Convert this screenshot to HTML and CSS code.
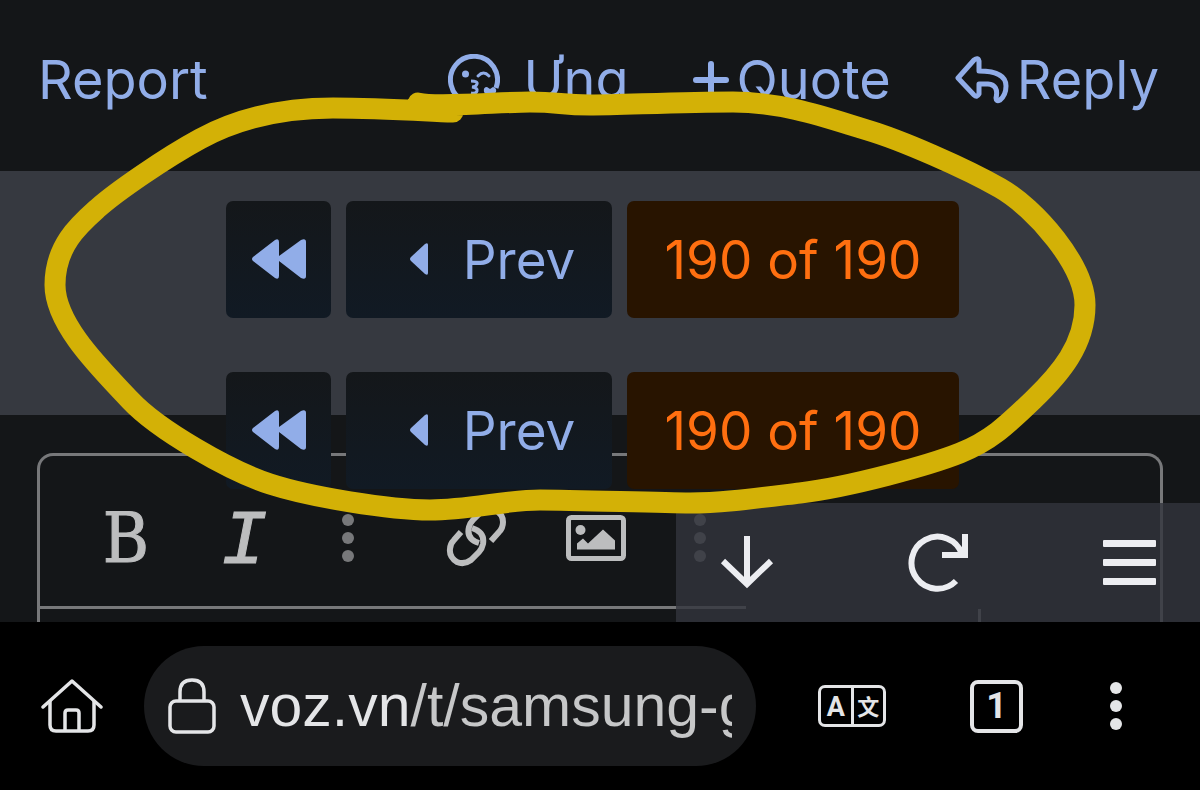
FILE: index.html
```html
<!DOCTYPE html>
<html lang="vi">
<head>
  <meta charset="UTF-8">
  <meta name="viewport" content="width=device-width, initial-scale=1.0">
  <title>voz.vn</title>
  <link rel="stylesheet" href="styles.css">
</head>
<body>
  <main class="page">
    <div class="post-actions">
      <a href="#" class="action report">Report</a>
      <a href="#" class="action react">
        <svg class="icon" width="52" height="52" viewBox="0 0 52 52" fill="none" stroke="currentColor" stroke-width="5">
          <path d="M48 34A23.500 23.500 0 1 0 38 46"/>
          <circle cx="17.500" cy="20" r="3.500" fill="currentColor" stroke="none"/>
          <path d="M30 22q5.500-6 11 0" stroke-width="3" stroke-linecap="round"/>
          <path d="M23 27q7 0 6 3t-5 3q6 1 5 4t-6 2" stroke-width="3"/>
          <path d="M42 46l-6-8q-1-5 3-5l3 2 3-2q4 1 3 5z" fill="currentColor" stroke="none"/>
        </svg>
        <span>Ưng</span>
      </a>
      <a href="#" class="action quote">
        <svg class="icon" width="36" height="40" viewBox="0 0 36 40" fill="none" stroke="currentColor" stroke-width="6" stroke-linecap="round">
          <path d="M18 4v32M3 20h30"/>
        </svg>
        <span>Quote</span>
      </a>
      <a href="#" class="action reply">
        <svg class="icon" width="54" height="50" viewBox="0 0 54 50" fill="none" stroke="currentColor" stroke-width="5" stroke-linejoin="round">
          <path d="M3 23L19 5q4-3 5 1v10q27 0 27 15 0 9-6 14-4 2-4-2 3-13-8-14h-9v10q-2 4-5 1z"/>
        </svg>
        <span>Reply</span>
      </a>
    </div>

    <div class="pagination">
      <nav class="page-nav">
        <a href="#" class="nav-btn first" aria-label="First page">
          <svg width="54" height="42" viewBox="0 0 54 42" fill="currentColor">
            <path d="M1 18L23 1q4-2 4 2v14L49 1q5-2 5 2v34q0 4-5 2L27 22v15q0 4-4 2L1 22q-2-2 0-4z"/>
          </svg>
        </a>
        <a href="#" class="nav-btn prev">
          <svg width="72" height="34" viewBox="0 0 72 34" fill="currentColor">
            <path d="M28 14L42 1q3-2 3 1v28q0 3-3 1L28 18q-2-2 0-4z"/>
          </svg>
          <span>Prev</span>
        </a>
        <a href="#" class="nav-btn current">190 of 190</a>
      </nav>
      <nav class="page-nav">
        <a href="#" class="nav-btn first" aria-label="First page">
          <svg width="54" height="42" viewBox="0 0 54 42" fill="currentColor">
            <path d="M1 18L23 1q4-2 4 2v14L49 1q5-2 5 2v34q0 4-5 2L27 22v15q0 4-4 2L1 22q-2-2 0-4z"/>
          </svg>
        </a>
        <a href="#" class="nav-btn prev">
          <svg width="72" height="34" viewBox="0 0 72 34" fill="currentColor">
            <path d="M28 14L42 1q3-2 3 1v28q0 3-3 1L28 18q-2-2 0-4z"/>
          </svg>
          <span>Prev</span>
        </a>
        <a href="#" class="nav-btn current">190 of 190</a>
      </nav>
    </div>

    <div class="editor">
      <div class="toolbar">
        <button class="tool bold">B</button>
        <button class="tool italic">I</button>
        <button class="tool more" aria-label="More text options">
          <svg width="12" height="48" viewBox="0 0 12 48" fill="currentColor">
            <circle cx="6" cy="6" r="6"/><circle cx="6" cy="24" r="6"/><circle cx="6" cy="42" r="6"/>
          </svg>
        </button>
        <span class="spacer"></span>
        <button class="tool" aria-label="Insert link">
          <svg width="64" height="60" viewBox="0 2 64 60" fill="none" stroke="currentColor" stroke-width="6">
            <path d="M33 37q-13-4-10-16 1-4 4-7l8-8q7-5 14-2 8 4 8 12 0 6-4 10l-8 9"/>
            <path d="M26 22q13 4 11 16-1 5-4 8l-8 8q-7 5-14 2-8-5-7-13 0-5 4-9l7-8"/>
          </svg>
        </button>
        <button class="tool" aria-label="Insert image">
          <svg width="60" height="46" viewBox="0 0 60 46" fill="currentColor">
            <rect x="2.500" y="2.500" width="55" height="41" rx="3" fill="none" stroke="currentColor" stroke-width="5"/>
            <circle cx="14.500" cy="15" r="5"/>
            <path d="M11 34.500v-6l6-5 5 5 15-14 12 11v9z"/>
          </svg>
        </button>
        <button class="tool more" aria-label="More options">
          <svg width="12" height="48" viewBox="0 0 12 48" fill="currentColor">
            <circle cx="6" cy="6" r="6"/><circle cx="6" cy="24" r="6"/><circle cx="6" cy="42" r="6"/>
          </svg>
        </button>
      </div>
      <div class="editor-body"></div>
    </div>

    <div class="float-bar">
      <button class="float-btn" aria-label="Scroll down">
        <svg width="54" height="54" viewBox="0 0 54 54" fill="none" stroke="currentColor" stroke-width="6">
          <path d="M27 0v48M3 25l24 23 24-23"/>
        </svg>
      </button>
      <button class="float-btn" aria-label="Reload">
        <svg width="60" height="60" viewBox="0 0 60 60" fill="none" stroke="currentColor" stroke-width="6">
          <path d="M48 48A26 26 0 1 1 54 21"/>
          <path d="M57 1v21H34"/>
        </svg>
      </button>
      <button class="float-btn" aria-label="Menu">
        <svg width="54" height="46" viewBox="0 0 54 46" fill="currentColor">
          <rect width="53" height="7" x="1" rx="1"/><rect width="53" height="7" x="1" y="19" rx="1"/><rect width="53" height="7" x="1" y="38" rx="1"/>
        </svg>
      </button>
    </div>
  </main>

  <footer class="browser-bar">
    <button class="bar-btn" aria-label="Home">
      <svg width="62" height="56" viewBox="0 0 62 56" fill="none" stroke="currentColor" stroke-width="3.500" stroke-linejoin="round">
        <path d="M2 29L31 3l29 26" stroke-linecap="round"/>
        <path d="M9 23v24q0 6 6 6h32q6 0 6-6V23"/>
        <path d="M24 53V35q0-3 3-3h8q3 0 3 3v18"/>
      </svg>
    </button>
    <div class="address">
      <svg class="lock" width="48" height="56" viewBox="0 0 48 56" fill="none" stroke="currentColor" stroke-width="3.500">
        <rect x="2" y="23" width="44" height="31" rx="6"/>
        <path d="M12 23V14q0-12 12-12t12 12v9"/>
      </svg>
      <input type="text" class="url" aria-label="Address" value="voz.vn/t/samsung-galaxy">
    </div>
    <button class="bar-btn translate" aria-label="Translate">
      <span>A</span><span class="han">文</span>
    </button>
    <button class="bar-btn tabs">1</button>
    <button class="bar-btn menu" aria-label="Menu">
      <svg width="12" height="48" viewBox="0 0 12 48" fill="currentColor">
        <circle cx="6" cy="6" r="6"/><circle cx="6" cy="24" r="6"/><circle cx="6" cy="42" r="6"/>
      </svg>
    </button>
  </footer>

  <!-- hand-drawn marker around the duplicated page navigation -->
  <svg class="marker" viewBox="0 0 1200 790" fill="none">
    <path d="M418 103C435 108 500 102 530 102S560 105 590 105S680 102 733 102S833 120 867 130S965 168 1000 188S1085 265 1085 305S1060 374 1033 400S990 441 960 453S850 487 800 493S720 503 690 503S575 500 540 500S470 510 430 510S310 497 270 484S158 430 130 400S55 325 55 285S80 224 98 208S165 158 200 139S280 108 333 108S440 112 453 112"/>
  </svg>
</body>
</html>
```
FILE: styles.css
```css
:root {
  --bg: #141618;
  --band: #363940;
  --link: #91ade8;
  --line: #77787a;
  --tool: #bcbdbe;
  --orange: #ff6f10;
  --light: #e4e5e7;
}
* {
  box-sizing: border-box;
  margin: 0;
  padding: 0;
}
body {
  height: 100vh;
  display: flex;
  flex-direction: column;
  position: relative;
  background: #000;
  font-family: 'Inter', sans-serif;
  font-size: 53px;
  line-height: 60px;
  overflow: hidden;
}
a {
  color: var(--link);
  text-decoration: none;
}
button {
  flex: none;
  background: none;
  border: none;
  color: inherit;
  font: inherit;
  cursor: pointer;
}
svg {
  display: block;
  flex: none;
}

/* post */
.page {
  flex: 1;
  min-height: 0;
  position: relative;
  background: var(--bg);
  overflow: hidden;
}
.post-actions {
  display: flex;
  align-items: flex-start;
  gap: 64px;
  height: 171px;
  padding: 50px 41px 0 38px;
  font-size: 54px;
}
.action {
  display: flex;
  align-items: center;
  gap: 8px;
}
.report {
  margin-right: auto;
}
.react {
  gap: 24px;
}

/* page navigation */
.pagination {
  display: flex;
  flex-direction: column;
  gap: 54px;
  height: 244px;
  padding-top: 30px;
  background: var(--band);
}
.page-nav {
  display: flex;
  justify-content: center;
  position: relative;
  z-index: 1;
}
.nav-btn {
  display: flex;
  align-items: center;
  justify-content: center;
  height: 117px;
  margin-right: 15px;
  border-radius: 7px;
  background: linear-gradient(#14171a, #111a24);
}
.first {
  width: 105px;
}
.prev {
  width: 266px;
  gap: 8px;
}
.current {
  width: 332px;
  background: #281400;
  color: var(--orange);
}

/* editor */
.editor {
  margin: 38px 37px 0 37px;
  border: 3px solid var(--line);
  border-bottom: none;
  border-radius: 16px 16px 0 0;
}
.toolbar {
  display: flex;
  align-items: center;
  width: 63%;
  height: 153px;
  padding: 14px 0 0 27px;
  border-bottom: 3px solid var(--line);
  color: var(--tool);
}
.tool {
  display: flex;
  align-items: center;
  justify-content: center;
  width: 118px;
  height: 80px;
}
.bold {
  font-family: 'DejaVu Serif Condensed', 'DejaVu Serif', serif;
  font-size: 70px;
  -webkit-text-stroke: 1px;
}
.italic {
  padding-top: 8px;
  font-family: 'Liberation Mono', monospace;
  font-style: italic;
  font-size: 78px;
  -webkit-text-stroke: 1px;
}
.more {
  width: 90px;
  color: var(--line);
}
.spacer {
  width: 26px;
}
.editor-body {
  width: 84%;
  height: 60px;
  border-right: 3px solid var(--line);
}

/* floating buttons */
.float-bar {
  position: absolute;
  right: 0;
  bottom: 0;
  z-index: 2;
  display: flex;
  align-items: center;
  justify-content: space-between;
  width: 524px;
  height: 119px;
  padding: 0 44px;
  background: rgba(50, 53, 61, 0.8);
  color: #ecedf1;
}

/* browser bar */
.browser-bar {
  display: flex;
  align-items: center;
  padding: 24px 78px 24px 41px;
  background: #000;
  color: var(--light);
}
.address {
  flex: 1;
  min-width: 0;
  display: flex;
  align-items: center;
  gap: 24px;
  height: 120px;
  margin: 0 62px 0 41px;
  padding: 0 24px;
  border-radius: 60px;
  background: #1a1b1d;
}
.url {
  flex: 1;
  min-width: 0;
  height: 80px;
  border: none;
  outline: none;
  font-family: 'Liberation Sans', Arial, sans-serif;
  font-size: 59px;
  color: #c6c7c8;
  /* host is brighter than the path */
  background: linear-gradient(90deg, var(--light) 171px, #c6c7c8 171px);
  -webkit-background-clip: text;
  background-clip: text;
  -webkit-text-fill-color: transparent;
}
.translate {
  display: flex;
  width: 68px;
  height: 42px;
  border: 3px solid;
  border-radius: 7px;
  font-family: Roboto, sans-serif;
  font-weight: 700;
  font-size: 27px;
  line-height: 38px;
}
.translate span {
  flex: 1;
}
.translate .han {
  border-left: 3px solid;
  font-family: 'Noto Sans CJK SC', sans-serif;
  font-size: 22px;
  line-height: 34px;
}
.tabs {
  width: 53px;
  height: 53px;
  margin: 0 87px 0 84px;
  border: 4px solid;
  border-radius: 8px;
  font-family: Roboto, sans-serif;
  font-weight: 700;
  font-size: 36px;
  line-height: 45px;
}

.marker {
  position: absolute;
  top: 0;
  left: 0;
  z-index: 3;
  width: 100%;
  pointer-events: none;
}
.marker path {
  stroke: #d3b106;
  stroke-width: 21px;
  stroke-linecap: round;
}
```
